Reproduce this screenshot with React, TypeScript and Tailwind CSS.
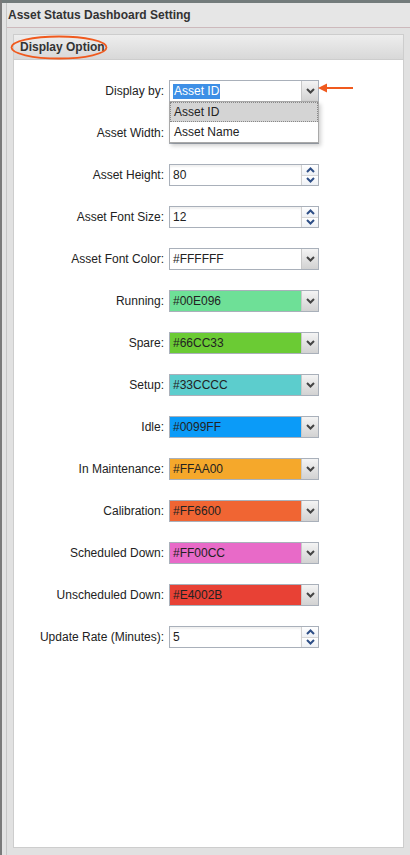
import React from 'react';

type Field = {
  label: string;
  kind: 'select' | 'spin' | 'color';
  value: string;
  bg?: string;
};

const fields: Field[] = [
  { label: 'Display by:', kind: 'select', value: 'Asset ID' },
  { label: 'Asset Width:', kind: 'spin', value: '' },
  { label: 'Asset Height:', kind: 'spin', value: '80' },
  { label: 'Asset Font Size:', kind: 'spin', value: '12' },
  { label: 'Asset Font Color:', kind: 'color', value: '#FFFFFF', bg: 'bg-white' },
  { label: 'Running:', kind: 'color', value: '#00E096', bg: 'bg-[#6ee097]' },
  { label: 'Spare:', kind: 'color', value: '#66CC33', bg: 'bg-[#6bcb34]' },
  { label: 'Setup:', kind: 'color', value: '#33CCCC', bg: 'bg-[#5ccdcd]' },
  { label: 'Idle:', kind: 'color', value: '#0099FF', bg: 'bg-[#0b9bf8]' },
  { label: 'In Maintenance:', kind: 'color', value: '#FFAA00', bg: 'bg-[#f5a82b]' },
  { label: 'Calibration:', kind: 'color', value: '#FF6600', bg: 'bg-[#f06533]' },
  { label: 'Scheduled Down:', kind: 'color', value: '#FF00CC', bg: 'bg-[#e86ac8]' },
  { label: 'Unscheduled Down:', kind: 'color', value: '#E4002B', bg: 'bg-[#e84135]' },
  { label: 'Update Rate (Minutes):', kind: 'spin', value: '5' },
];

function DownChevron({ color = '#444' }: { color?: string }) {
  return (
    <svg width="9" height="6" viewBox="0 0 9 6">
      <path d="M1 1 L4.5 4.5 L8 1" fill="none" stroke={color} strokeWidth="2" />
    </svg>
  );
}

function UpChevron({ color }: { color: string }) {
  return (
    <svg width="9" height="6" viewBox="0 0 9 6">
      <path d="M1 5 L4.5 1.5 L8 5" fill="none" stroke={color} strokeWidth="2" />
    </svg>
  );
}

function ArrowButton() {
  return (
    <div className="w-[17px] h-full flex items-center justify-center border-l border-[#c8c8c8] bg-gradient-to-b from-[#f4f4f4] to-[#d2d2d2]">
      <DownChevron />
    </div>
  );
}

function SpinButtons() {
  return (
    <div className="w-[17px] h-full flex flex-col border-l border-[#d0d0d0]">
      <div className="flex-1 flex items-center justify-center bg-gradient-to-b from-[#ffffff] to-[#eef1f5] border-b border-[#d6d6d6]">
        <UpChevron color="#2d4e86" />
      </div>
      <div className="flex-1 flex items-center justify-center bg-gradient-to-b from-[#ffffff] to-[#eef1f5]">
        <DownChevron color="#2d4e86" />
      </div>
    </div>
  );
}

function Control({ f }: { f: Field }) {
  if (f.kind === 'spin') {
    return (
      <div className="w-[150px] h-[22px] flex border border-[#a9b0ba] bg-white">
        <div className="flex-1 flex items-center pl-[3px] text-[#222] shadow-[inset_0_2px_2px_rgba(0,0,0,0.06)]">{f.value}</div>
        <SpinButtons />
      </div>
    );
  }
  if (f.kind === 'select') {
    return (
      <div className="relative w-[150px] h-[22px]">
        <div className="w-full h-full flex border border-[#a9b0ba] bg-white">
          <div className="flex-1 flex items-center pl-[3px]">
            <span className="bg-[#3d8fe6] text-white leading-[15px] px-[1px]">{f.value}</span>
          </div>
          <ArrowButton />
        </div>
        <div className="absolute left-0 top-[21px] w-[150px] z-10 bg-white border border-[#a9a9a9] shadow-[2px_3px_4px_rgba(0,0,0,0.18)]">
          <div className="h-[20px] flex items-center pl-[3px] bg-[#d4d4d4] border border-dotted border-[#888] text-[#222]">Asset ID</div>
          <div className="h-[20px] flex items-center pl-[4px] text-[#222]">Asset Name</div>
        </div>
        <svg className="absolute left-[148px] top-[1px] z-20" width="40" height="14" viewBox="0 0 40 14">
          <path d="M9 7 L36 7" stroke="#f05a1e" strokeWidth="2" />
          <path d="M1 7 L10 2.5 L10 11.5 Z" fill="#f05a1e" />
        </svg>
      </div>
    );
  }
  return (
    <div className="w-[150px] h-[22px] flex border border-[#a9b0ba] bg-white">
      <div className={`flex-1 flex items-center pl-[3px] text-[#222] ${f.bg}`}>{f.value}</div>
      <ArrowButton />
    </div>
  );
}

export default function App() {
  return (
    <div
      className="w-[410px] h-[855px] flex flex-col bg-[#e3e3e3] border-l-2 border-[#7a7a7a] text-[12px] text-[#222] overflow-hidden"
      style={{ fontFamily: '"Liberation Sans", Arial, sans-serif' }}
    >
      <div className="h-[3px] bg-[#737b7b] shrink-0" />
      <div className="flex-1 flex flex-col ml-1 border-l border-[#c6c6c6] bg-[#e1e1e1]">
        <div className="h-[25px] shrink-0 flex items-center px-[1px] bg-[#e6e6e6] border-b border-[#cdb9bc] font-bold text-[#333]">
          Asset Status Dashboard Setting
        </div>
        <div className="flex-1 flex flex-col pl-[6px] pr-[6px] pt-[6px] pb-[7px]">
          <div className="flex-1 flex flex-col border border-[#cdcdcd]">
            <div className="relative h-[25px] shrink-0 flex items-center pl-[6px] bg-gradient-to-b from-[#eeeeee] to-[#d8d8d8] border-b border-[#cdcdcd] font-bold text-[#333]">
              Display Option
              <svg className="absolute left-[-4px] top-[0px]" width="100" height="25" viewBox="0 0 100 25">
                <ellipse cx="49" cy="12.5" rx="47.5" ry="11" fill="none" stroke="#f05a1e" strokeWidth="1.8" />
              </svg>
            </div>
            <div className="flex-1 bg-white pt-[20px] flex flex-col gap-[20px]">
              {fields.map((f) => (
                <div key={f.label} className="flex items-center h-[22px]">
                  <div className="w-[150px] text-right text-[#222]">{f.label}</div>
                  <div className="ml-[5px]">
                    <Control f={f} />
                  </div>
                </div>
              ))}
            </div>
          </div>
        </div>
      </div>
    </div>
  );
}
